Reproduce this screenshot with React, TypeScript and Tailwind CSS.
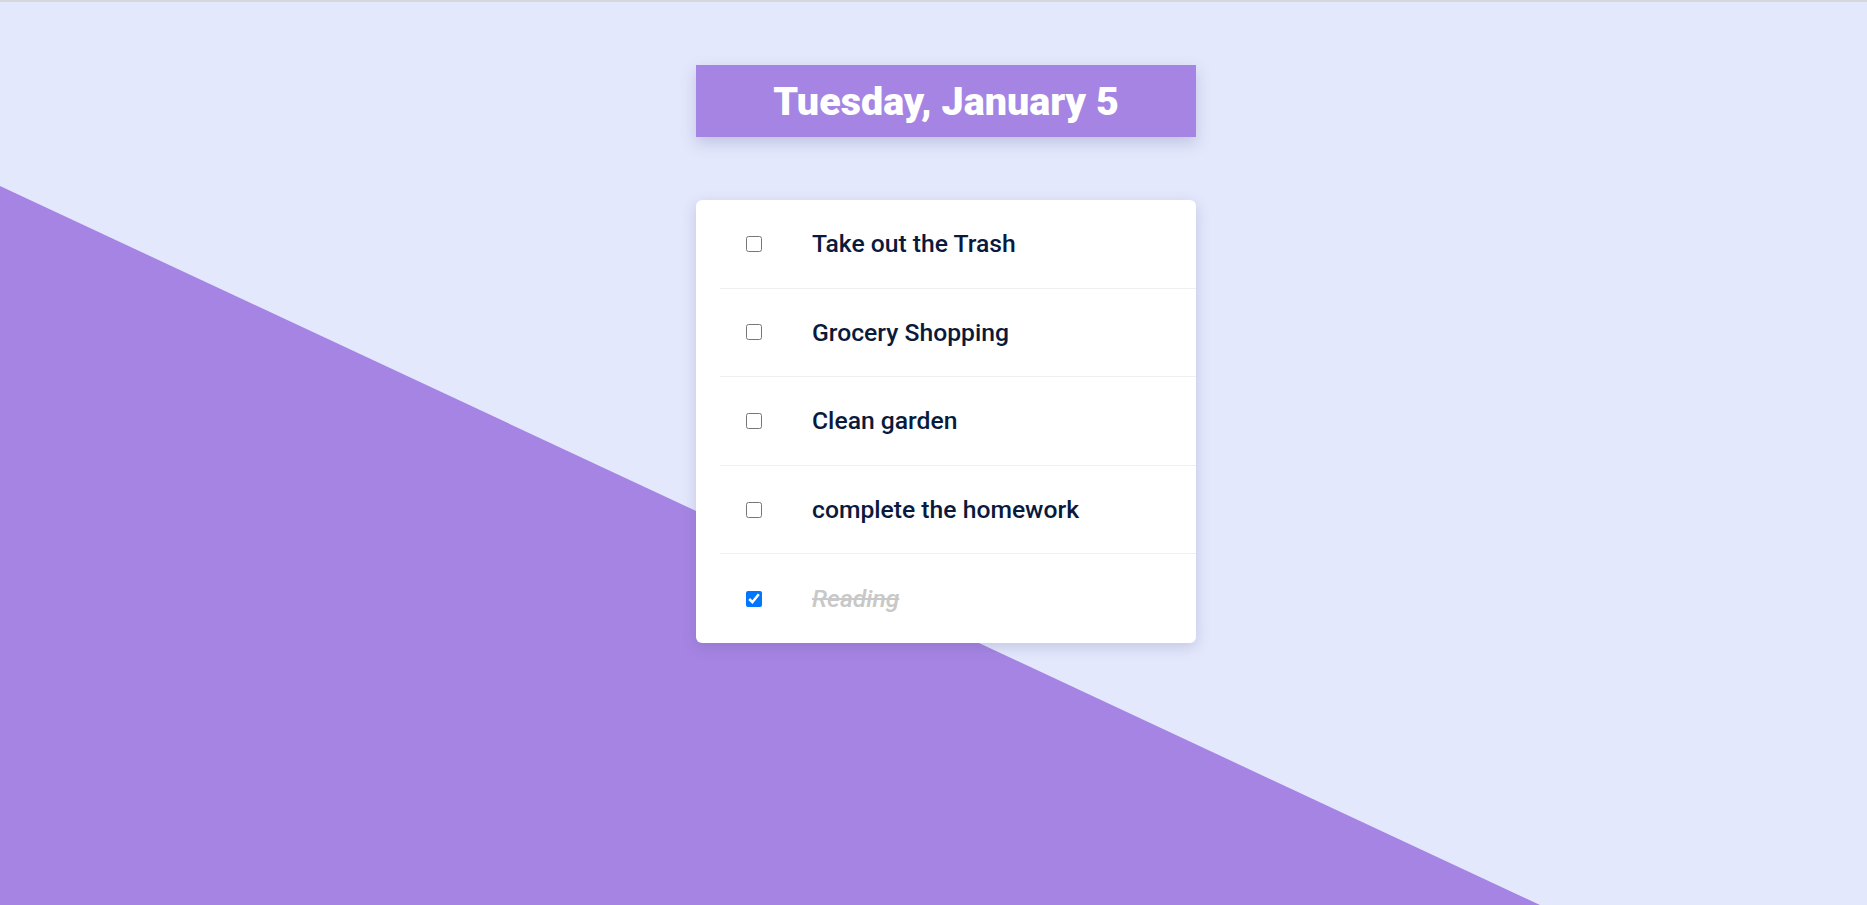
import React, { useState } from "react";

const initial = [
  { text: "Take out the Trash", done: false },
  { text: "Grocery Shopping", done: false },
  { text: "Clean garden", done: false },
  { text: "complete the homework", done: false },
  { text: "Reading", done: true },
];

export default function App() {
  const [items, setItems] = useState(initial);
  return (
    <div
      className="relative h-screen w-full overflow-hidden bg-[#e3e8fc] border-t-2 border-[#d5d7dd]"
      style={{ fontFamily: "Roboto, 'Noto Sans', sans-serif" }}
    >
      <div className="absolute inset-0 bg-[#a684e3] [clip-path:polygon(0_184px,1540px_903px,0_903px)]" />
      <div className="relative flex flex-col items-center pt-[63px] pl-[25px]">
        <div className="w-[500px] h-[72px] bg-[#a684e3] flex items-center justify-center shadow-[0_6px_14px_rgba(90,90,150,0.25)]">
          <h1 className="text-[39.5px] font-black text-white leading-none pt-[2px]">Tuesday, January 5</h1>
        </div>
        <div className="mt-[63px] w-[500px] bg-white rounded-md shadow-[0_4px_14px_rgba(80,80,140,0.22)] pl-6">
          {items.map((it, i) => (
            <div
              key={i}
              className={`flex items-center h-[88.6px] ${i < items.length - 1 ? "border-b border-[#efefef]" : ""}`}
            >
              <input
                type="checkbox"
                checked={it.done}
                onChange={() =>
                  setItems(items.map((x, j) => (j === i ? { ...x, done: !x.done } : x)))
                }
                className="ml-[26px] w-4 h-4 m-0 accent-[#0075ff]"
              />
              <span
                className={`ml-[50px] text-[24.7px] font-medium ${
                  it.done ? "italic line-through text-[#c8c8c8]" : "text-[#0a1a3c]"
                }`}
              >
                {it.text}
              </span>
            </div>
          ))}
        </div>
      </div>
    </div>
  );
}
